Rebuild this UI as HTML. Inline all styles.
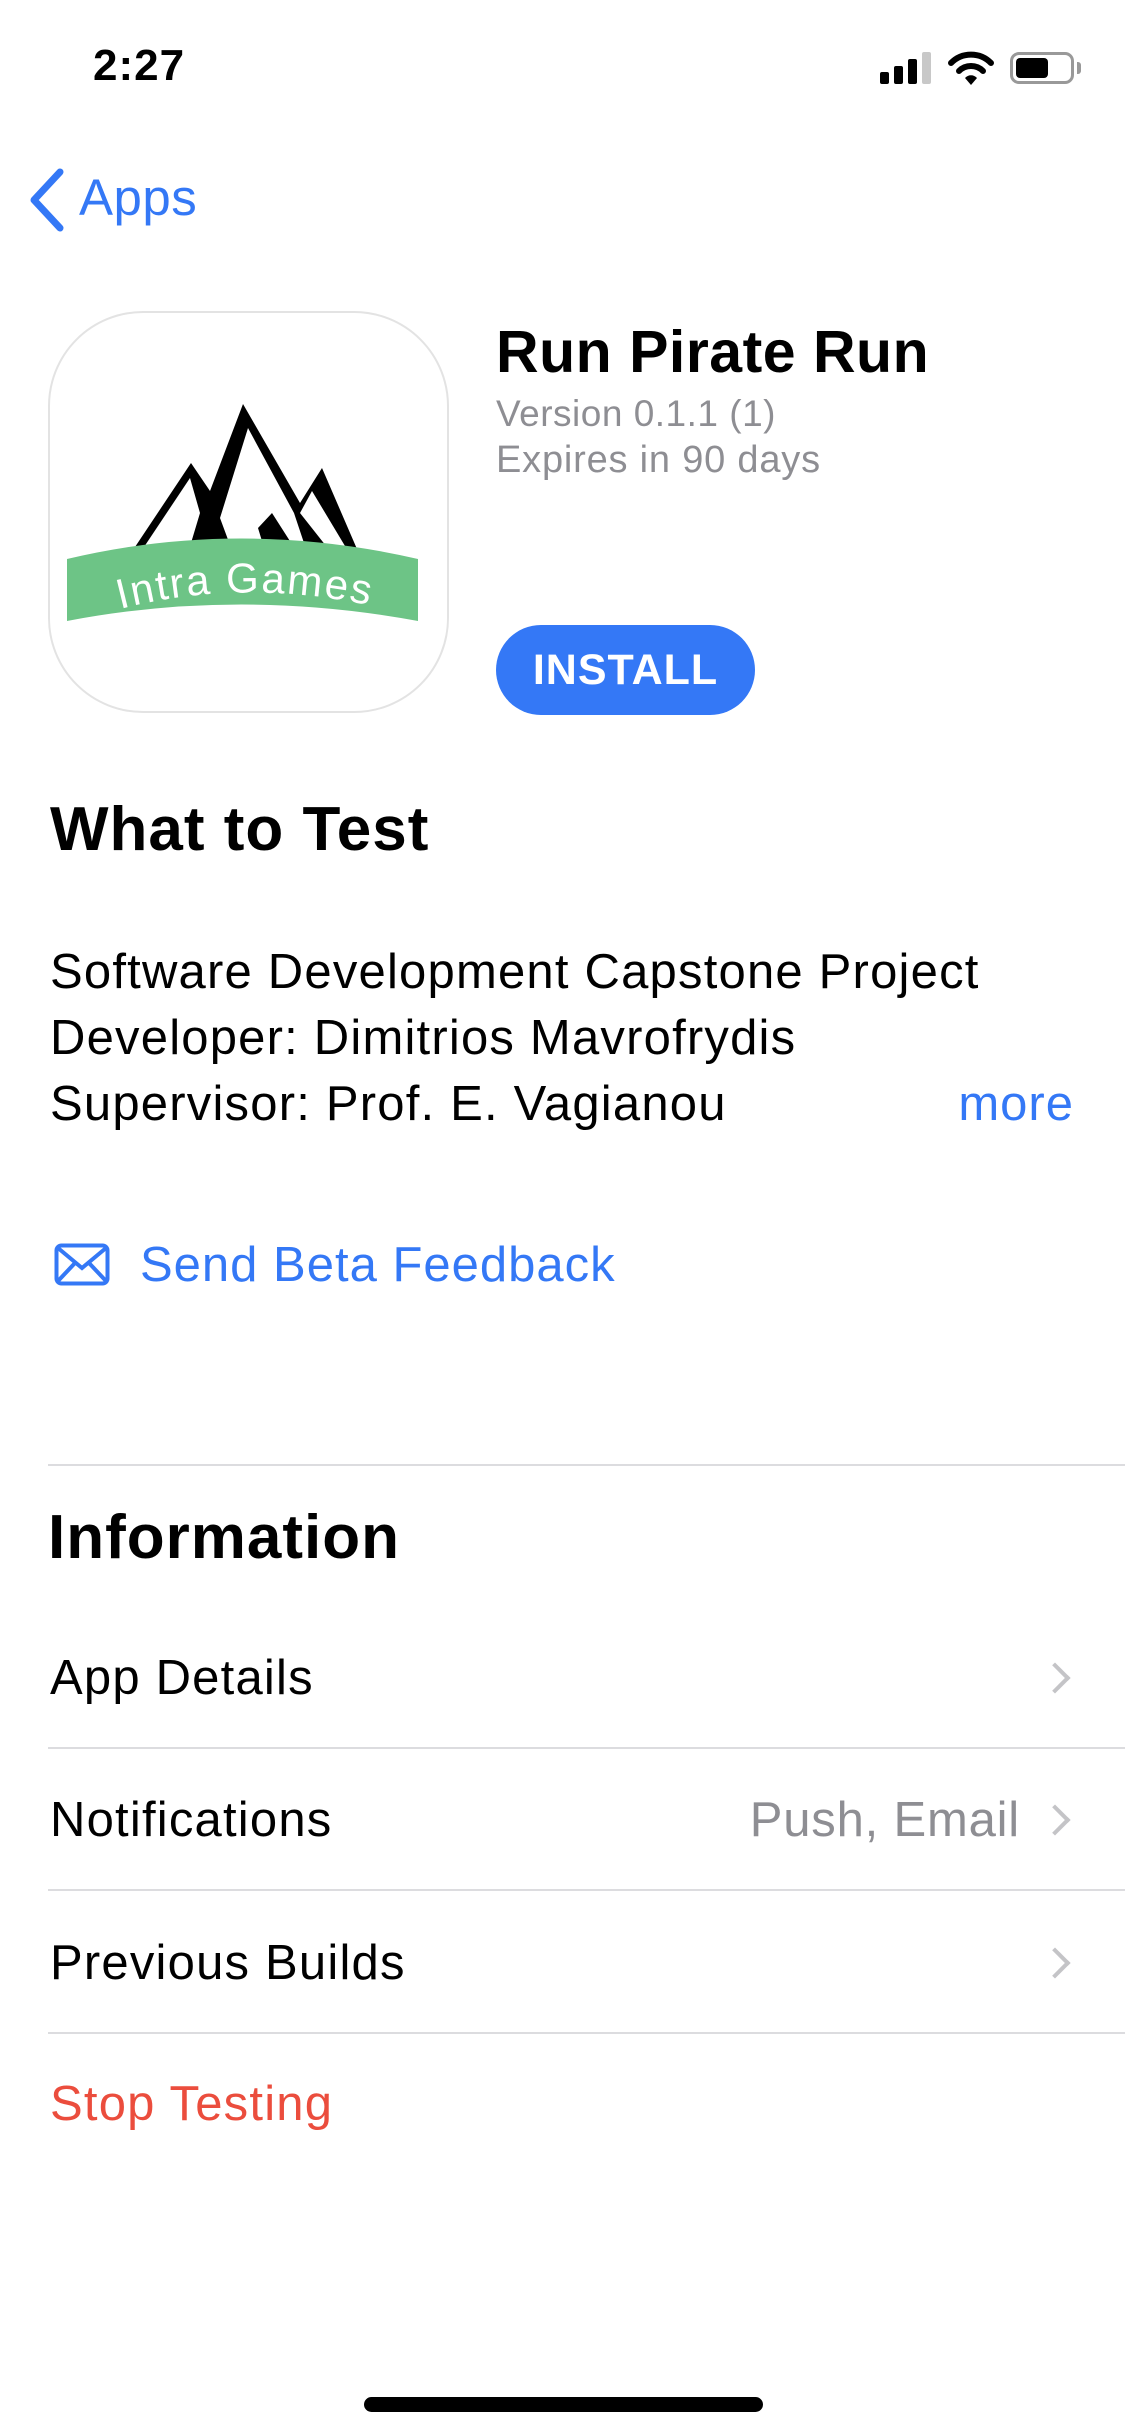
<!DOCTYPE html>
<html><head><meta charset="utf-8">
<style>
*{margin:0;padding:0;box-sizing:border-box}
body{width:1125px;height:2436px;background:#fff;font-family:"Liberation Sans",sans-serif;position:relative;overflow:hidden;color:#000}
.a{position:absolute;white-space:nowrap}
.blue{color:#3478f6}
.row{font-size:49px;left:50px;line-height:60px;letter-spacing:1.2px}
.div{position:absolute;left:48px;right:0;height:2px;background:#dcdcdf}
.chev{position:absolute;width:22px;height:22px;border-top:4px solid #c4c4c7;border-right:4px solid #c4c4c7;transform:rotate(45deg)}
.h{font-size:62px;font-weight:bold;letter-spacing:1px}
</style></head><body>
<div class="a" style="left:93px;top:41px;font-size:44px;font-weight:bold;letter-spacing:1px">2:27</div>
<!-- signal -->
<div class="a" style="left:880px;top:72px;width:9px;height:12px;background:#000;border-radius:2px"></div>
<div class="a" style="left:894px;top:66px;width:9px;height:18px;background:#000;border-radius:2px"></div>
<div class="a" style="left:908px;top:59px;width:9px;height:25px;background:#000;border-radius:2px"></div>
<div class="a" style="left:922px;top:52px;width:9px;height:32px;background:#c8c8c8;border-radius:2px"></div>
<svg class="a" style="left:948px;top:50px" width="46" height="36" viewBox="0 0 46 36">
<path d="M3 13 A28 28 0 0 1 43 13" stroke="#000" stroke-width="6" fill="none" stroke-linecap="round"/>
<path d="M11 21 A17 17 0 0 1 35 21" stroke="#000" stroke-width="6" fill="none" stroke-linecap="round"/>
<path d="M17 28 L23 35 L29 28 A8 8 0 0 0 17 28Z" fill="#000"/></svg>
<div class="a" style="left:1010px;top:52px;width:64px;height:32px;border:3px solid #999;border-radius:9px"></div>
<div class="a" style="left:1016px;top:58px;width:32px;height:20px;background:#000;border-radius:4px"></div>
<div class="a" style="left:1077px;top:62px;width:4px;height:12px;background:#999;border-radius:0 3px 3px 0"></div>
<!-- back -->
<svg class="a" style="left:24px;top:166px" width="44" height="68" viewBox="0 0 44 68"><path d="M36 6 L10 34 L36 62" stroke="#3478f6" stroke-width="7" fill="none" stroke-linecap="round" stroke-linejoin="round"/></svg>
<div class="a blue" style="left:79px;top:168px;font-size:51px;letter-spacing:0.5px">Apps</div>
<!-- icon -->
<div class="a" style="left:48px;top:311px;width:401px;height:402px;border:2px solid #e3e3e3;border-radius:95px;overflow:hidden">
<svg width="401" height="402" viewBox="0 0 401 402">
<path d="M79 243 L141 150 L160 178 L193 91 L250 190 L272 155 L310 243Z" fill="#000"/>
<path d="M90 240 L140 165 L150 200 L138 240Z" fill="#fff"/>
<path d="M198 115 L170 205 L180 232 L215 238 L208 215 L222 200 L245 236 L256 236 L244 200 Z" fill="#fff"/>
<path d="M262 178 L250 200 L280 238 L298 238Z" fill="#fff"/>
<path d="M17 246 Q190 205 368 246 L368 308 Q190 275 17 308Z" fill="#6dc486"/>
<path id="cv" d="M70 296 Q200 262 345 298" fill="none"/>
<text font-size="42" fill="#fff" font-family="Liberation Sans,sans-serif" letter-spacing="2"><textPath href="#cv">Intra Games</textPath></text>
</svg></div>
<div class="a" style="left:496px;top:318px;font-size:59px;font-weight:bold;letter-spacing:0.5px">Run Pirate Run</div>
<div class="a" style="left:496px;top:393px;font-size:37px;color:#8e8e93;letter-spacing:0.5px">Version 0.1.1 (1)</div>
<div class="a" style="left:496px;top:439px;font-size:38px;color:#8e8e93;letter-spacing:0.8px">Expires in 90 days</div>
<div class="a" style="left:496px;top:625px;width:259px;height:90px;background:#3478f6;border-radius:45px;color:#fff;font-size:43px;font-weight:bold;text-align:center;line-height:90px;letter-spacing:1px">INSTALL</div>
<div class="a h" style="left:50px;top:794px">What to Test</div>
<div class="a" style="left:50px;top:939px;font-size:49px;line-height:66px;letter-spacing:1.2px">Software Development Capstone Project<br>Developer: Dimitrios Mavrofrydis<br>Supervisor: Prof. E. Vagianou</div>
<div class="a blue" style="right:51px;top:1074px;font-size:49px;line-height:60px;letter-spacing:1px">more</div>
<svg class="a" style="left:54px;top:1243px" width="56" height="43" viewBox="0 0 56 43"><rect x="2.5" y="2.5" width="51" height="38" rx="5" stroke="#3478f6" stroke-width="4" fill="none"/><path d="M4 5 L28 25 L52 5 M4 38 L21 20 M52 38 L35 20" stroke="#3478f6" stroke-width="4" fill="none"/></svg>
<div class="a blue" style="left:140px;top:1235px;font-size:49px;line-height:60px;letter-spacing:1px">Send Beta Feedback</div>
<div class="div" style="top:1464px"></div>
<div class="a h" style="left:48px;top:1502px">Information</div>
<div class="a row" style="top:1648px">App Details</div>
<div class="chev" style="left:1044px;top:1667px"></div>
<div class="div" style="top:1747px"></div>
<div class="a row" style="top:1790px">Notifications</div>
<div class="a" style="right:105px;top:1790px;font-size:49px;line-height:60px;color:#8e8e93;letter-spacing:0.8px">Push, Email</div>
<div class="chev" style="left:1044px;top:1809px"></div>
<div class="div" style="top:1889px"></div>
<div class="a row" style="top:1933px">Previous Builds</div>
<div class="chev" style="left:1044px;top:1952px"></div>
<div class="div" style="top:2032px"></div>
<div class="a row" style="top:2074px;color:#eb4d3d">Stop Testing</div>
<div class="a" style="left:364px;top:2397px;width:399px;height:15px;background:#000;border-radius:8px"></div>
</body></html>
